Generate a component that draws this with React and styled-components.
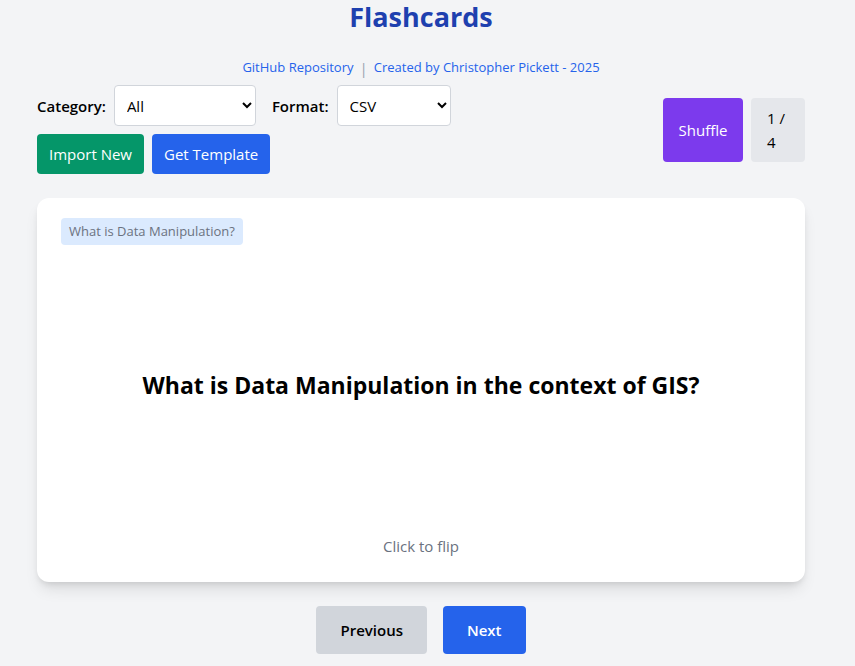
import React, { useState } from "react";
import styled, { createGlobalStyle } from "styled-components";

const GlobalStyle = createGlobalStyle`
  *, *::before, *::after { box-sizing: border-box; }
  body {
    margin: 0;
    background: #f3f4f6;
    color: #000;
    font: 15px/24px "Open Sans", "Noto Sans", sans-serif;
  }
  button, select { font: inherit; color: inherit; }
`;

const Page = styled.main`
  max-width: 896px;
  margin: 0 auto;
  padding: 0 50px 12px 37px;
`;

const Title = styled.h1`
  margin: 0;
  font-size: 27px;
  line-height: 34px;
  font-weight: 700;
  text-align: center;
  color: #1e40af;
`;

const Credits = styled.nav`
  display: flex;
  justify-content: center;
  align-items: flex-start;
  gap: 6px;
  margin-top: 22px;
  color: #9ca3af;
`;

const CreditLink = styled.a`
  font-size: 13px;
  line-height: 22px;
  color: #2563eb;
  text-decoration: none;

  &:hover { text-decoration: underline; }
`;

const Toolbar = styled.div`
  display: flex;
  justify-content: space-between;
  align-items: center;
  margin-top: 5px;
`;

const Controls = styled.div`
  display: flex;
  flex-wrap: wrap;
  align-items: center;
  gap: 8px;
  max-width: 430px;
`;

const Field = styled.div`
  display: flex;
  align-items: center;
  gap: 8px;
  margin-right: 8px;
`;

const Label = styled.label`
  font-weight: 600;
`;

const Select = styled.select`
  width: ${(p) => p.$width};
  height: 41px;
  padding: 0 8px;
  border: 1px solid #d1d5db;
  border-radius: 4px;
  background: #fff;
`;

const tones = {
  green: "#059669",
  blue: "#2563eb",
  purple: "#7c3aed",
  gray: "#d1d5db",
};

const Button = styled.button`
  padding: 8px 12px;
  border: 0;
  border-radius: 4px;
  background: ${(p) => tones[p.$tone]};
  color: #fff;
  cursor: pointer;
`;

const ShuffleButton = styled(Button)`
  width: 80px;
`;

const NavButton = styled(Button)`
  padding: 12px 24px;
  font-weight: 600;
  color: ${(p) => (p.$tone === "gray" ? "#000" : "#fff")};
`;

const Status = styled.div`
  display: flex;
  gap: 8px;
`;

const Counter = styled.div`
  width: 54px;
  padding: 8px 16px;
  border-radius: 4px;
  background: #e5e7eb;
`;

const Card = styled.section`
  display: grid;
  grid-template-rows: 1fr auto 1fr;
  min-height: 384px;
  margin-top: 24px;
  padding: 20px 24px 24px;
  border-radius: 12px;
  background: #fff;
  box-shadow: 0 10px 15px -3px rgba(0, 0, 0, 0.1), 0 4px 6px -2px rgba(0, 0, 0, 0.1);
  cursor: pointer;
`;

const Tag = styled.span`
  align-self: start;
  justify-self: start;
  padding: 4px 8px;
  border-radius: 4px;
  background: #dbeafe;
  color: #6b7280;
  font-size: 13px;
  line-height: 19px;
`;

const Question = styled.h2`
  margin: 0 0 6px;
  font-size: 23px;
  line-height: 32px;
  font-weight: 700;
  text-align: center;
`;

const Hint = styled.p`
  align-self: end;
  margin: 0;
  text-align: center;
  color: #6b7280;
`;

const Pager = styled.div`
  display: flex;
  justify-content: center;
  gap: 16px;
  margin-top: 24px;
`;

export default function App() {
  const [category, setCategory] = useState("All");
  const [format, setFormat] = useState("CSV");
  return (
    <>
      <GlobalStyle />
      <Page>
        <Title>Flashcards</Title>
        <Credits>
          <CreditLink href="#repository">GitHub Repository</CreditLink>
          <span>|</span>
          <CreditLink href="#author">Created by Christopher Pickett - 2025</CreditLink>
        </Credits>
        <Toolbar>
          <Controls>
            <Field>
              <Label htmlFor="category">Category:</Label>
              <Select id="category" $width="142px" value={category} onChange={(e) => setCategory(e.target.value)}>
                <option>All</option>
              </Select>
            </Field>
            <Field>
              <Label htmlFor="format">Format:</Label>
              <Select id="format" $width="114px" value={format} onChange={(e) => setFormat(e.target.value)}>
                <option>CSV</option>
              </Select>
            </Field>
            <Button $tone="green">Import New</Button>
            <Button $tone="blue">Get Template</Button>
          </Controls>
          <Status>
            <ShuffleButton $tone="purple">Shuffle</ShuffleButton>
            <Counter>1 / 4</Counter>
          </Status>
        </Toolbar>
        <Card>
          <Tag>What is Data Manipulation?</Tag>
          <Question>What is Data Manipulation in the context of GIS?</Question>
          <Hint>Click to flip</Hint>
        </Card>
        <Pager>
          <NavButton $tone="gray">Previous</NavButton>
          <NavButton $tone="blue">Next</NavButton>
        </Pager>
      </Page>
    </>
  );
}
